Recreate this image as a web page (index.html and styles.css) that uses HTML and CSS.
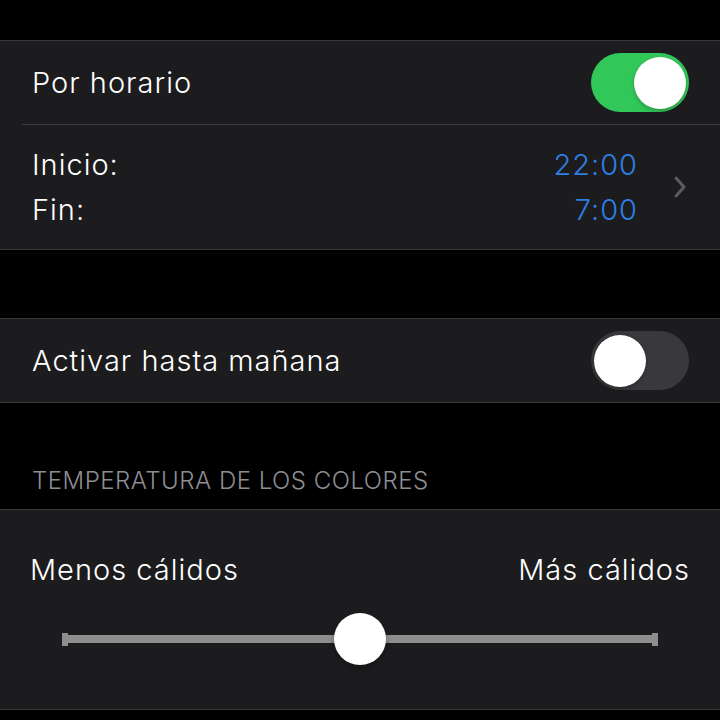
FILE: index.html
```html
<!DOCTYPE html>
<html lang="es">
<head>
    <meta charset="UTF-8">
    <meta name="viewport" content="width=device-width, initial-scale=1.0">
    <title>Night Shift</title>
    <link rel="stylesheet" href="styles.css">
</head>
<body>
    <div class="screen">
        <div class="group">
            <div class="row">
                <span class="label">Por horario</span>
                <span class="switch on"><span class="knob"></span></span>
            </div>
            <div class="row schedule">
                <div class="times-labels">
                    <span class="label">Inicio:</span>
                    <span class="label">Fin:</span>
                </div>
                <div class="times-values">
                    <span class="time">22:00</span>
                    <span class="time">7:00</span>
                </div>
                <svg class="chevron" width="14" height="24" viewBox="0 0 14 24">
                    <path d="M3 3 L11 12 L3 21" fill="none" stroke="#5c5c60" stroke-width="3" stroke-linecap="round" stroke-linejoin="round"/>
                </svg>
            </div>
        </div>

        <div class="group second">
            <div class="row">
                <span class="label">Activar hasta mañana</span>
                <span class="switch"><span class="knob"></span></span>
            </div>
        </div>

        <div class="section-title">TEMPERATURA DE LOS COLORES</div>

        <div class="group slider-group">
            <div class="slider-labels">
                <span class="label">Menos cálidos</span>
                <span class="label">Más cálidos</span>
            </div>
            <div class="slider">
                <span class="cap"></span>
                <span class="track"></span>
                <span class="cap"></span>
                <span class="thumb" style="left: 50%;"></span>
            </div>
        </div>
    </div>
</body>
</html>
```

FILE: styles.css
```css
body {
    margin: 0;
    background: #000;
    font-family: Inter, "Liberation Sans", sans-serif;
    font-weight: 300;
    color: #fff;
}

.screen {
    width: 720px;
    height: 720px;
    overflow: hidden;
    padding-top: 40px;
    box-sizing: border-box;
}

.group {
    background: #1c1c1e;
    border-top: 1px solid #38383a;
    border-bottom: 1px solid #38383a;
}

.second {
    margin-top: 68px;
}

.row {
    display: flex;
    align-items: center;
    justify-content: space-between;
    height: 83px;
    padding: 0 31px 0 32px;
    position: relative;
}

.row + .row {
    border-top: 1px solid #3a3a3c;
    margin-left: 22px;
    padding-left: 10px;
}

.label {
    font-size: 29px;
    letter-spacing: 1px;
}

.schedule {
    height: 124px;
    justify-content: flex-start;
}

.times-labels,
.times-values {
    display: flex;
    flex-direction: column;
    gap: 9px;
    line-height: 36px;
}

.times-labels {
    flex: 1;
}

.times-values {
    align-items: flex-end;
}

.time {
    font-size: 29px;
    letter-spacing: 1px;
    color: #2c7fe3;
}

.chevron {
    margin-left: 35px;
    margin-right: 2px;
}

.switch {
    width: 98px;
    height: 59px;
    border-radius: 30px;
    background: #39393d;
    display: flex;
    align-items: center;
    padding: 0 3px;
    box-sizing: border-box;
}

.switch.on {
    background: #32c759;
    justify-content: flex-end;
}

.knob {
    width: 52px;
    height: 52px;
    border-radius: 50%;
    background: #fff;
    box-shadow: 0 2px 4px rgba(0, 0, 0, 0.25);
}

.section-title {
    margin-top: 63px;
    padding: 0 32px;
    height: 43px;
    font-size: 24px;
    color: #8d8d92;
    letter-spacing: 0.5px;
}

.slider-group {
    height: 201px;
    padding: 0 30px;
    box-sizing: border-box;
}

.slider-labels {
    display: flex;
    justify-content: space-between;
    padding-top: 42px;
    line-height: 36px;
}

.slider {
    position: relative;
    display: flex;
    align-items: center;
    margin: 25px 32px 0;
    height: 52px;
}

.track {
    flex: 1;
    height: 8px;
    background: #8e8e8e;
}

.cap {
    width: 6px;
    height: 13px;
    background: #8e8e8e;
}

.thumb {
    position: absolute;
    top: 0;
    width: 52px;
    height: 52px;
    margin-left: -26px;
    border-radius: 50%;
    background: #fff;
    box-shadow: 0 3px 6px rgba(0, 0, 0, 0.3);
}
```
